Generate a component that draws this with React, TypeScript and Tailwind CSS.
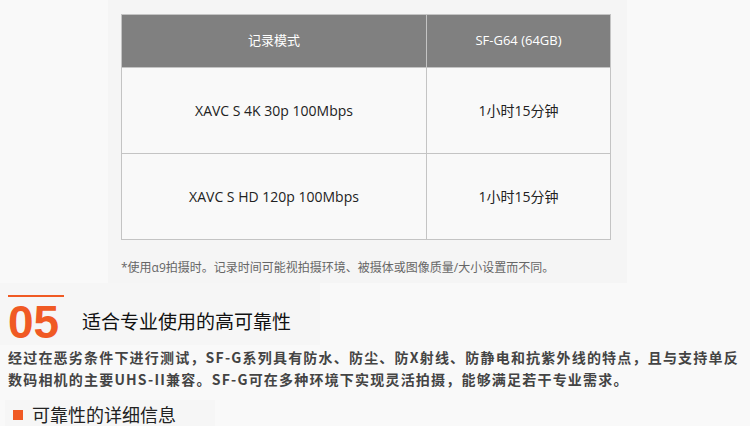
export default function App() {
  const cjk = { fontFamily: '"Open Sans", "Noto Sans CJK SC", sans-serif' };
  return (
    <div className="w-[750px] h-[426px] overflow-hidden bg-[#f9f9f9] text-[#222]" style={cjk}>
      <div className="ml-[108px] w-[519px] h-[283px] bg-[#f5f5f5] pt-[14px] pl-[13px]">
        <table className="w-[490px] border-collapse text-center text-[14px]">
          <thead>
            <tr className="bg-[#808080] text-white h-[53px] text-[13px]">
              <th className="w-[305px] border border-[#c4c4c4] font-normal">记录模式</th>
              <th className="border border-[#c4c4c4] font-normal">SF-G64 (64GB)</th>
            </tr>
          </thead>
          <tbody className="bg-[#f9f9f9]">
            <tr className="h-[86px]">
              <td className="border border-[#c4c4c4]">XAVC S 4K 30p 100Mbps</td>
              <td className="border border-[#c4c4c4]">1小时15分钟</td>
            </tr>
            <tr className="h-[86px]">
              <td className="border border-[#c4c4c4]">XAVC S HD 120p 100Mbps</td>
              <td className="border border-[#c4c4c4]">1小时15分钟</td>
            </tr>
          </tbody>
        </table>
        <p className="mt-[19px] text-[12px] text-[#666]">*使用α9拍摄时。记录时间可能视拍摄环境、被摄体或图像质量/大小设置而不同。</p>
      </div>
      <div className="flex items-end h-[62px] w-[320px] bg-[#f6f6f6] pl-[8px]">
        <div className="flex flex-col w-[56px]">
          <div className="h-[2px] bg-[#f05a24] mt-[12px]" />
          <div className="text-[46px] leading-[46px] font-bold text-[#f05a24] mt-[2px]" style={{ fontFamily: '"Liberation Sans", Arial, sans-serif' }}>05</div>
        </div>
        <div className="ml-[18px] mb-[9px] text-[19px] text-[#111]">适合专业使用的高可靠性</div>
      </div>
      <p className="mt-[1px] pl-[8px] text-[14px] leading-[22px] font-bold tracking-[1.2px] text-[#444] whitespace-nowrap" style={{ fontFamily: '"Noto Sans CJK SC", sans-serif' }}>
        经过在恶劣条件下进行测试，SF-G系列具有防水、防尘、防X射线、防静电和抗紫外线的特点，且与支持单反<br />数码相机的主要UHS-II兼容。SF-G可在多种环境下实现灵活拍摄，能够满足若干专业需求。
      </p>
      <div className="mt-[10px] ml-[5px] w-[210px] h-[30px] bg-[#f6f6f6] flex items-center">
        <span className="ml-[8px] w-[10px] h-[10px] bg-[#f05a24]" />
        <span className="ml-[9px] text-[18px] text-[#222]">可靠性的详细信息</span>
      </div>
    </div>
  );
}
